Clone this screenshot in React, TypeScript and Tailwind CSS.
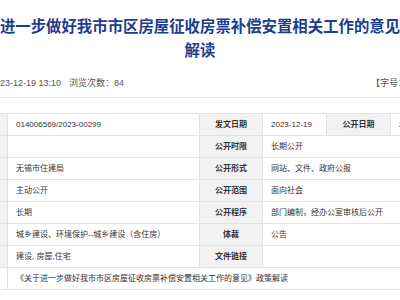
const font = {
  fontFamily: '"Liberation Sans", "Noto Sans CJK SC", sans-serif',
};

const labelCell =
  "h-[22px] border border-[#e3e3e3] bg-[#f2f2f2] text-center font-bold text-[#333]";
const valueCell = "h-[22px] border border-[#e3e3e3] bg-white pl-[8px] text-left text-[#333]";

const rows = [
  { l1: "公开方式", v1: "主动公开", l2: "公开范围", v2: "面向社会" },
  { l1: "时效", v1: "长期", l2: "公开程序", v2: "部门编制，经办公室审核后公开" },
  {
    l1: "主题分类",
    v1: "城乡建设、环境保护--城乡建设（含住房）",
    l2: "体裁",
    v2: "公告",
  },
  { l1: "关键词", v1: "建设, 房屋,住宅", l2: "文件链接", v2: "" },
];

export default function App() {
  return (
    <div className="h-[300px] w-[400px] overflow-hidden bg-white" style={font}>
      <div className="ml-[-56px] w-[512px]">
        <h1 className="mx-auto w-[470px] pt-[15px] text-center text-[15.4px] font-bold leading-[24px] text-[#1d3d8f]">
          关于进一步做好我市市区房屋征收房票补偿安置相关工作的意见政策解读
        </h1>

        <div className="mt-[14px] border-b border-dotted border-[#cfcfcf] pb-[8px]">
          <div className="flex h-[12px] items-center whitespace-nowrap text-[9px] leading-[12px] text-[#555]">
            <div className="flex w-[427px] shrink-0 pl-[46px]">
              <span>2023-12-19 13:10</span>
              <span className="ml-[8px]">浏览次数：84</span>
            </div>
            <span>【字号：大 中 小】</span>
          </div>
        </div>

        <table
          className="mt-[15px] w-[512px] table-fixed border-collapse text-[8px] leading-[10px]"
          style={font}
        >
          <colgroup>
            <col className="w-[63px]" />
            <col className="w-[192px]" />
            <col className="w-[63px]" />
            <col className="w-[64px]" />
            <col className="w-[64px]" />
            <col className="w-[66px]" />
          </colgroup>
          <tbody>
            <tr>
              <td className={labelCell}>索引号</td>
              <td className={valueCell}>014006569/2023-00299</td>
              <td className={labelCell}>发文日期</td>
              <td className={valueCell}>2023-12-19</td>
              <td className={labelCell}>公开日期</td>
              <td className={valueCell + " pl-[3px]"}>2023-12-19</td>
            </tr>
            <tr>
              <td className={labelCell}>文号</td>
              <td className={valueCell}></td>
              <td className={labelCell}>公开时限</td>
              <td className={valueCell} colSpan={3}>
                长期公开
              </td>
            </tr>
            <tr>
              <td className={labelCell}>发布机构</td>
              <td className={valueCell}>无锡市住建局</td>
              <td className={labelCell}>公开形式</td>
              <td className={valueCell} colSpan={3}>
                网站、文件、政府公报
              </td>
            </tr>
            {rows.map((r) => (
              <tr key={r.l1}>
                <td className={labelCell}>{r.l1}</td>
                <td className={valueCell}>{r.v1}</td>
                <td className={labelCell}>{r.l2}</td>
                <td className={valueCell} colSpan={3}>
                  {r.v2}
                </td>
              </tr>
            ))}
            <tr>
              <td className="h-[22px] border border-[#e3e3e3] bg-white"></td>
              <td className={valueCell + " pl-[4px]"} colSpan={5}>
                《关于进一步做好我市市区房屋征收房票补偿安置相关工作的意见》政策解读
              </td>
            </tr>
          </tbody>
        </table>
      </div>
    </div>
  );
}
